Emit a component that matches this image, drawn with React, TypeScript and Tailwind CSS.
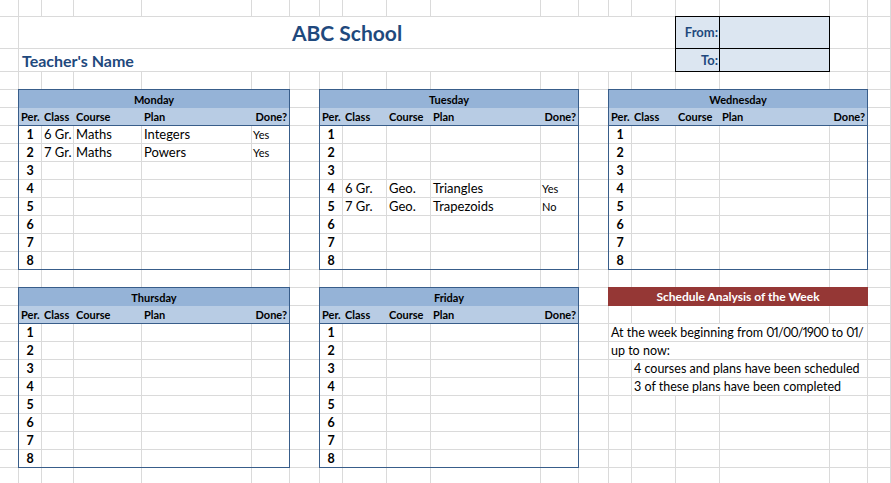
import React from "react";

// spreadsheet columns A..S and rows 1..26 (gridline included in each cell)
const COL_COUNT = 19;
const ROW_COUNT = 26;

type Row = { per: number; cls?: string; course?: string; plan?: string; done?: string };

const emptyWeek = (): Row[] => [1, 2, 3, 4, 5, 6, 7, 8].map((per) => ({ per }));

const monday: Row[] = emptyWeek();
monday[0] = { per: 1, cls: "6 Gr.", course: "Maths", plan: "Integers", done: "Yes" };
monday[1] = { per: 2, cls: "7 Gr.", course: "Maths", plan: "Powers", done: "Yes" };

const tuesday: Row[] = emptyWeek();
tuesday[3] = { per: 4, cls: "6 Gr.", course: "Geo.", plan: "Triangles", done: "Yes" };
tuesday[4] = { per: 5, cls: "7 Gr.", course: "Geo.", plan: "Trapezoids", done: "No" };

function DayTable({ day, area, wide, rows }: { day: string; area: string; wide: boolean; rows: Row[] }) {
  // Monday/Thursday sit on narrower class & wider course columns
  const w = wide
    ? ["w-[23px]", "w-[44px]", "w-[44px]", "w-[110px]"]
    : ["w-[23px]", "w-[32px]", "w-[68px]", "w-[110px]"];

  return (
    <div className={`${area} -ml-px -mt-px flex flex-col border border-[#385d8a] bg-white`}>
      <div className="flex h-[18px] items-center justify-center bg-[#95b3d7] text-[11px] font-bold">{day}</div>
      <div className="flex h-[18px] items-center border-b border-[#385d8a] bg-[#b8cce4] text-[11px] font-bold">
        <div className={`${w[0]} pl-[2px]`}>Per.</div>
        <div className={`${w[1]} pl-[2px]`}>Class</div>
        <div className={`${w[2]} pl-[2px]`}>Course</div>
        <div className={`${w[3]} pl-[2px]`}>Plan</div>
        <div className="flex-1 pr-[2px] text-right">Done?</div>
      </div>
      {rows.map((r, i) => (
        <div key={r.per} className={`flex ${i < 7 ? "h-[18px] border-b border-[#dadada]" : "h-[17px]"}`}>
          <div className={`${w[0]} flex items-center justify-center border-r border-[#dadada] text-[12.5px] font-bold`}>{r.per}</div>
          <div className={`${w[1]} flex items-center border-r border-[#dadada] pl-[2px] whitespace-nowrap`}>{r.cls}</div>
          <div className={`${w[2]} flex items-center border-r border-[#dadada] pl-[2px]`}>{r.course}</div>
          <div className={`${w[3]} flex items-center border-r border-[#dadada] pl-[2px]`}>{r.plan}</div>
          <div className="flex flex-1 items-center pl-[1px] text-[11px]">{r.done}</div>
        </div>
      ))}
    </div>
  );
}

export default function App() {
  return (
    <div
      className="h-[483px] w-[891px] overflow-hidden bg-white text-[13px] leading-[17px] text-black"
      style={{ fontFamily: "Lato, 'Liberation Sans', sans-serif" }}
    >
      <div className="grid">
        {/* sheet gridlines */}
        <div className="col-start-1 row-start-1 grid grid-cols-[19px_23px_32px_68px_110px_38px_30px_23px_44px_44px_110px_38px_30px_23px_44px_44px_110px_38px_23px] grid-rows-[17px_32px_23px_repeat(23,18px)]">
          {Array.from({ length: COL_COUNT * ROW_COUNT }).map((_, i) => (
            <div key={i} className="border-r border-b border-[#dadada]" />
          ))}
        </div>

        {/* sheet content */}
        <div className="col-start-1 row-start-1 grid grid-cols-[19px_23px_32px_68px_110px_38px_30px_23px_44px_44px_110px_38px_30px_23px_44px_44px_110px_38px_23px] grid-rows-[17px_32px_23px_repeat(23,18px)]">
          <div className="col-[2/16] row-[2/3] flex items-center justify-center border-r border-b border-[#dadada] bg-white text-[21px] font-bold text-[#1f497d]">
            ABC School
          </div>
          <div className="col-[2/16] row-[3/4] flex items-center border-r border-b border-[#dadada] bg-white pl-[3px] text-[16px] font-bold text-[#1f497d]">
            Teacher's Name
          </div>

          <div className="col-[16/18] row-[2/4] -ml-px -mt-px flex flex-col border border-black bg-[#dce6f1] font-bold text-[#1f497d]">
            <div className="flex h-[32px] border-b border-black">
              <div className="flex w-[44px] items-center justify-end border-r border-black pr-[1px]">From:</div>
              <div className="flex-1" />
            </div>
            <div className="flex flex-1">
              <div className="flex w-[44px] items-center justify-end border-r border-black pr-[1px]">To:</div>
              <div className="flex-1" />
            </div>
          </div>

          <DayTable day="Monday" area="col-[2/7] row-[5/15]" wide={false} rows={monday} />
          <DayTable day="Tuesday" area="col-[8/13] row-[5/15]" wide rows={tuesday} />
          <DayTable day="Wednesday" area="col-[14/19] row-[5/15]" wide rows={emptyWeek()} />
          <DayTable day="Thursday" area="col-[2/7] row-[16/26]" wide={false} rows={emptyWeek()} />
          <DayTable day="Friday" area="col-[8/13] row-[16/26]" wide rows={emptyWeek()} />

          {/* weekly analysis */}
          <div className="col-[14/19] row-[16/17] -ml-px -mt-px flex items-center justify-center bg-[#953735] text-[12px] font-bold text-white">
            Schedule Analysis of the Week
          </div>
          <div className="col-[14/19] row-[18/19] flex items-center overflow-hidden whitespace-nowrap border-r border-b border-[#dadada] bg-white pl-[2px] text-[12.5px]">
            At the week beginning from&nbsp;<span className="tracking-[-0.7px] proportional-nums">01/00/1900</span>&nbsp;to&nbsp;
            <span className="tracking-[-0.7px] proportional-nums">01/</span>
          </div>
          <div className="col-[14/19] row-[19/20] flex items-center border-r border-b border-[#dadada] bg-white pl-[2px] text-[12.5px]">
            up to now:
          </div>
          <div className="col-[15/19] row-[20/21] flex items-center whitespace-nowrap border-r border-b border-[#dadada] bg-white pl-[2px] text-[12.5px]">
            4 courses and plans have been scheduled
          </div>
          <div className="col-[15/19] row-[21/22] flex items-center whitespace-nowrap border-r border-b border-[#dadada] bg-white pl-[2px] text-[12.5px]">
            3 of these plans have been completed
          </div>
        </div>
      </div>
    </div>
  );
}
